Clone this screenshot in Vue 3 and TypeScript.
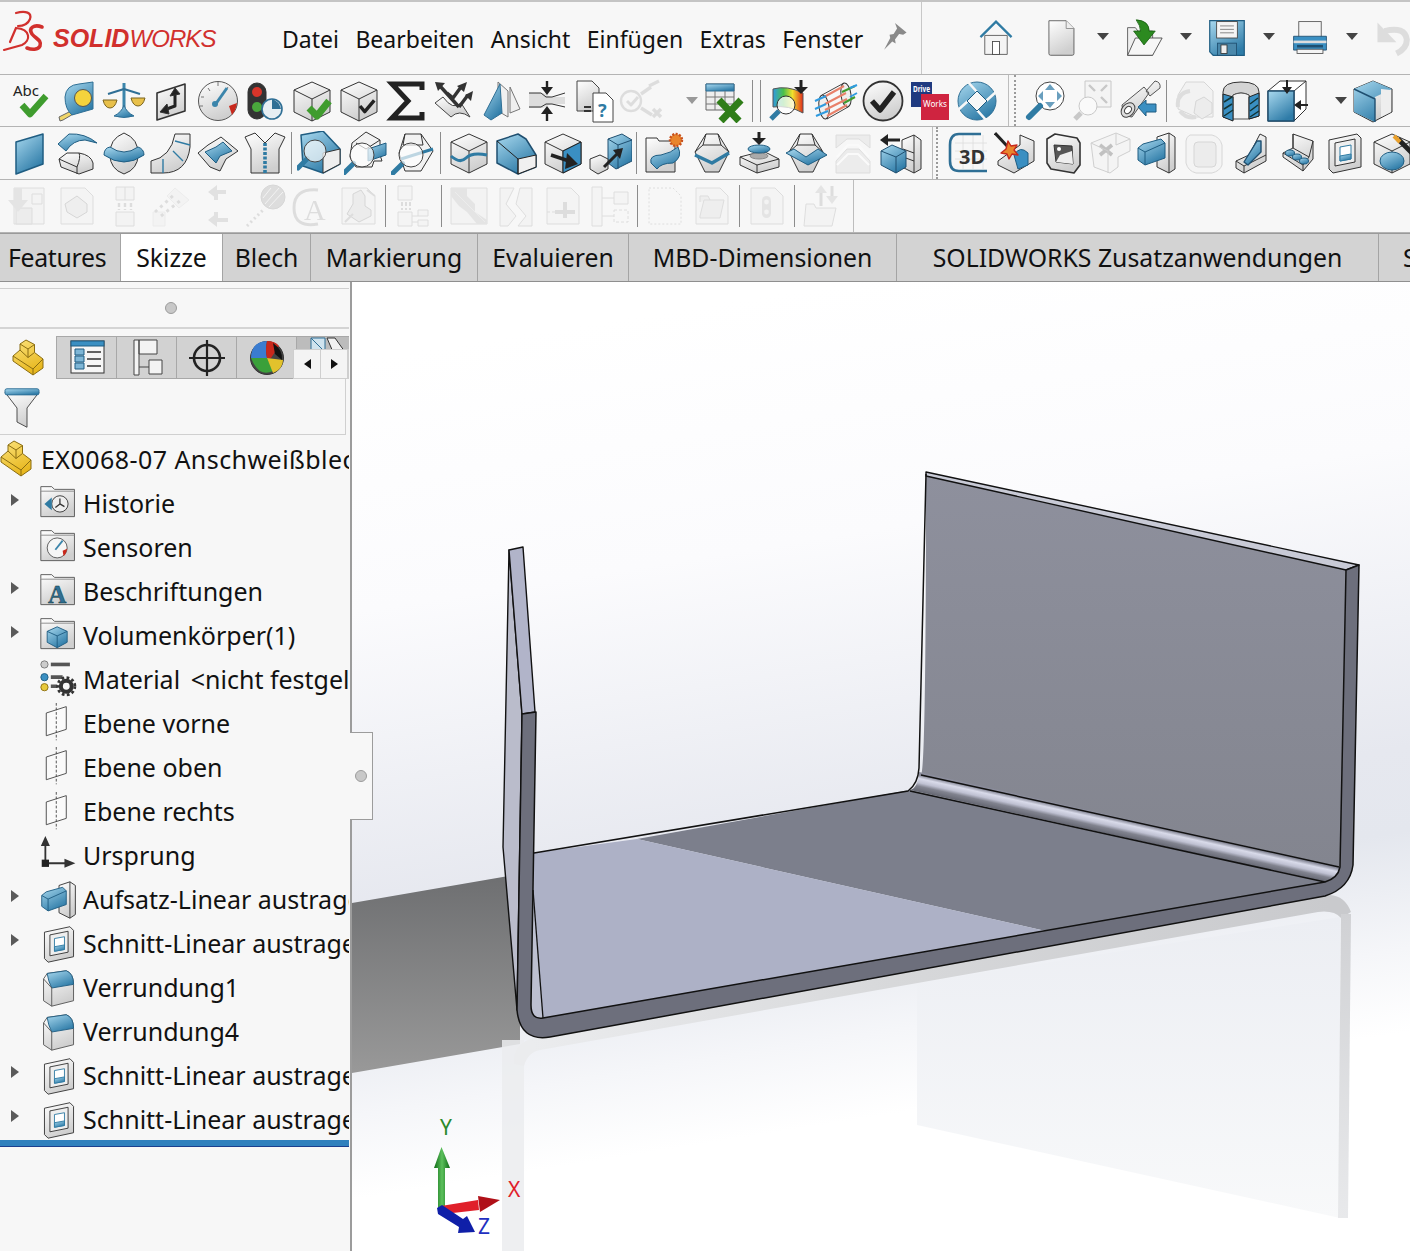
<script setup lang="ts">
type Item = { i?: string; dim?: boolean; kind?: 'line' | 'full' | 'dots' | 'drop'; sp?: number; w?: number }
type TreeRow = { label: string; icon: string; arrow?: boolean; root?: boolean }

const B = 'url(#bl)'
const W = 'url(#wh)'
const Y = 'url(#ye)'

const cube = `<path fill="${W}" d="M22 3L40 11V33L22 42L4 33V11Z"/><path d="M4 11L22 20L40 11M22 20V42"/>`
const lens = (x: number, y: number, r: number) =>
  `<path d="M${x - r * 0.7} ${y + r * 0.7}L${x - r - 6} ${y + r + 6}" stroke="#2f7ba3" stroke-width="5" stroke-linecap="round"/><circle cx="${x}" cy="${y}" r="${r}" fill="#ffffffb0" stroke="#444"/>`
const gem = `<path fill="${W}" d="M16 3H28L39 21L29 41H15L5 21Z"/><path d="M16 3L13 14L5 21M28 3L31 14L39 21M13 14H31"/>`
const check = (x: number, y: number, s = 1, c = '#222', w = 3.4) =>
  `<path d="M${x} ${y}l${5 * s} ${6 * s}l${10 * s} ${-12 * s}" stroke="${c}" stroke-width="${w}"/>`
const folder = `<path fill="${W}" stroke="#555" d="M2 8V4H14L17 7H39V37H2Z"/><path stroke="#888" d="M2 9H39"/>`
const square = `<path fill="${W}" d="M6 9L34 3L38 7V36L10 42L6 38Z"/><path fill="#eee" d="M12 12L32 8V31L12 35Z"/><path fill="#fff" stroke="#2f7ba3" d="M17 16L28 14V28L17 30Z"/><path fill="${B}" stroke="#2f7ba3" d="M17 25L28 23V28L17 30Z"/>`
const fillet = `<path fill="${W}" stroke="#555" d="M5 12L9 6L30 3Q38 6 38 18V36L14 42L5 36Z"/><path fill="${B}" stroke="#1f5d82" d="M9 6L30 3Q38 6 38 18L14 22Q10 14 9 6Z"/><path stroke="#555" d="M5 12L14 22V42"/>`
const boss = `<path fill="${W}" d="M22 6L34 2L40 6V38L34 42L22 36Z"/><path d="M34 2V42"/><path fill="${B}" stroke="#1f5d82" d="M3 17L8 13L26 8L30 12V27L10 34L3 29Z"/><path stroke="#1f5d82" d="M3 17L10 21L30 12M10 21V34"/>`
const part = `<path fill="${Y}" stroke="#8a6d12" stroke-linejoin="round" d="M7 20L14 14V8L20 4L28.5 8.5V16.5L37 23V32L27 39L7 25Z"/><path fill="none" stroke="#8a6d12" d="M7 20L27 33V39M27 33L37 23M14 8L22 13V21.5M22 13L28.5 8.5M14 14L22 21.5L28.5 16.5"/>`
const plane = `<path stroke="#444" fill="#fafafa" d="M8 11L30 4V29L8 36Z"/><path stroke="#444" stroke-dasharray="3 2" d="M19 0V41"/>`

const icons: Record<string, string> = {
  abc: `<text x="5" y="17" font-size="15" fill="#222" stroke="none" font-family="Noto Sans">Abc</text><path d="M14 26L22 35L38 17" stroke="#3f9c2e" stroke-width="6.5"/>`,
  tape: `<path fill="#f0d66a" stroke="#666" d="M4 38L18 31L20 34L8 41L5 42Z"/><path fill="${B}" stroke="#2f6f95" d="M10 18Q11 6 24 5L38 3V30L17 36Q10 30 10 18Z"/><circle cx="28" cy="19" r="8.5" fill="#f5d33c" stroke="#555"/>`,
  scales: `<path d="M22 4V30" stroke="#3b85ab" stroke-width="3"/><path d="M6 15L22 10L38 15" stroke="#2f6f95" stroke-width="2"/><path fill="#e8c04a" stroke="#7a6420" d="M1 21H15Q13 29 8 29Q3 29 1 21ZM29 19H43Q41 27 36 27Q31 27 29 19Z"/><path fill="${B}" stroke="#2f6f95" d="M12 37Q20 33 22 26Q24 33 32 37Q22 40 12 37Z"/>`,
  rapid: `<path fill="${W}" stroke-width="1.6" d="M8 14L36 5V32L8 41Z"/><path stroke="#222" stroke-width="3" d="M15 31L26 27V15"/><path fill="#222" d="M21 17L26 9L31 15ZM18 25L11 33L20 35Z"/>`,
  gauge: `<circle cx="22" cy="22" r="19.5" fill="${W}" stroke="#555"/><path fill="#c8281c" stroke="none" d="M33 27L41 24Q40 31 36 36Z"/><path stroke="#777" d="M7 27H4M5 18H8M12 9L14 12M22 3V7M32 8L30 11"/><path d="M19 26L31 9" stroke="#3b85ab" stroke-width="3"/><circle cx="19" cy="25" r="3" fill="#3b85ab" stroke="none"/>`,
  traffic: `<rect x="5" y="4" width="18" height="36" rx="9" fill="#333"/><circle cx="14" cy="13" r="5" fill="#d8352a" stroke="none"/><circle cx="14" cy="28" r="5" fill="#49a83c" stroke="none"/><circle cx="29" cy="30" r="10" fill="#e6eef3" stroke="#2f6f95" stroke-width="1.6"/><path fill="#2f6f95" stroke="none" d="M29 30V20Q36 22 38 30Z"/>`,
  cubeok: `${cube}<path d="M19 29L27 37L39 22" stroke="#3f9c2e" stroke-width="7"/>`,
  cubechk: `${cube}${check(23, 27, 0.95)}`,
  sigma: `<path stroke="#222" stroke-width="5" stroke-linejoin="miter" d="M38 11V5H8L24 22L8 39H38V33"/>`,
  xarrows: `<path fill="${W}" stroke="#444" d="M4 24L12 18Q22 32 30 24L39 38Q28 30 20 38Z"/><path stroke="#333" stroke-width="3.4" d="M9 7L28 28M30 8L22 19L16 14M37 16L28 28"/><path fill="#333" stroke="none" d="M4 3L14 4L7 12ZM36 3L33 13L26 7ZM42 12L40 22L34 16Z"/>`,
  draft: `<path fill="#f0f0f0" stroke="#777" d="M20 3L30 12V38L20 32ZM32 8L42 30L32 34Z"/><path fill="${B}" stroke="#2f6f95" d="M22 5L6 36L13 41L24 34Z"/>`,
  thick: `<path fill="#ddd" stroke="none" d="M4 14H18L26 18H40V25H26L18 29H4Z"/><path stroke="#333" d="M4 14H16L21 18H27L40 14M4 28H16L21 25H27L40 28"/><path fill="#222" stroke="none" d="M16 8H28L22 16ZM16 35H28L22 27Z"/><path stroke="#222" stroke-width="2.4" d="M22 2V10M22 33V42"/>`,
  compare: `<path fill="${W}" stroke="#444" d="M5 2H20L27 9V32H5Z"/><path fill="#fff" stroke="#444" d="M21 14H34L41 21V43H21Z"/><path d="M12 28H19M12 32H19" stroke="#333" stroke-width="2"/><text x="26" y="38" fill="#2f7ba3" stroke="none" font-size="18" font-weight="700" font-family="Noto Sans">?</text>`,
  xcheck: `<circle cx="12" cy="22" r="10" stroke="#bbb" stroke-width="2.4"/><path d="M8 22l4 4l7 -8" stroke="#bbb" stroke-width="3"/><path stroke="#bbb" stroke-width="3.4" d="M22 15L32 8M22 29L33 36M30 7L40 2M34 30L42 38M42 30L34 38"/>`,
  excel: `<rect x="3" y="5" width="28" height="26" fill="#eee" stroke="#666"/><rect x="3" y="5" width="28" height="7" fill="${B}" stroke="#2f6f95"/><path stroke="#777" d="M3 18H31M3 25H31M12 12V31M22 12V31"/><path stroke="#2f7d18" stroke-width="7" d="M16 21L36 42M38 21L18 42"/>`,
  dxp: `<path fill="url(#rb)" stroke="#555" d="M6 10Q20 6 36 14V34Q22 26 6 28Z"/><circle cx="19" cy="26" r="9" fill="#ffffffc0" stroke="#333"/><path d="M12 32L4 40" stroke="#2f7ba3" stroke-width="5"/><path stroke="#222" stroke-width="3" d="M34 1V9"/><path fill="#222" stroke="none" d="M27 8H41L34 15Z"/>`,
  flow: `<path fill="#f8f8f8" stroke="#444" d="M8 16L30 4L34 28L13 40Z"/><ellipse cx="10" cy="28" rx="5" ry="12" fill="#eee" stroke="#333" transform="rotate(-8 10 28)"/><ellipse cx="32" cy="16" rx="5" ry="12" fill="#eee" stroke="#333" transform="rotate(-8 32 16)"/><path stroke="#e8816a" stroke-width="2" d="M10 18L30 7M11 25L32 14M11 31L33 20M13 37L33 26"/><path stroke="#3f9c2e" stroke-width="2" d="M28 13L41 7M30 24L41 18"/><path stroke="#2f9be0" stroke-width="2" d="M36 9L43 6M36 18L43 14M1 22L12 17M1 30L12 25M2 37L14 32"/>`,
  okcircle: `<circle cx="22" cy="22" r="19.5" fill="${W}" stroke="#333" stroke-width="1.8"/><path d="M11 22L19 31L33 13" stroke="#222" stroke-width="5.5"/>`,
  drive: `<rect x="3" y="3" width="21" height="25" fill="#1f3a80" stroke="none"/><rect x="13" y="15" width="28" height="26" fill="#cf2440" stroke="none"/><text x="5" y="13" font-size="9.5" font-weight="700" fill="#fff" stroke="none" font-family="Noto Sans" textLength="17" lengthAdjust="spacingAndGlyphs">Drive</text><text x="15" y="28" font-size="9.5" fill="#fff" stroke="none" font-family="Noto Sans" textLength="24" lengthAdjust="spacingAndGlyphs">Works</text>`,
  cycle: `<circle cx="22" cy="22" r="19" fill="${B}" stroke="#2f6f95"/><path stroke="#f7f7f7" stroke-width="2.6" d="M22 13L13 3M31 22L41 13M22 31L31 41M13 22L3 31"/><path fill="#f7f7f7" stroke="#1f5d82" d="M22 12L32 22L22 32L12 22Z"/>`,
  zoomfit: `<circle cx="26" cy="17" r="14" fill="#fff" stroke="#444"/><path d="M16 27L5 38" stroke="#2f7ba3" stroke-width="6" stroke-linecap="round"/><path fill="#6a9fbe" stroke="none" d="M26 5L31 11H21ZM26 29L31 23H21ZM14 17L19 12V22ZM38 17L33 12V22Z"/>`,
  zoomarea: `<rect x="14" y="2" width="26" height="26" fill="#f0f0f0" stroke="#888"/><path stroke="#888" stroke-width="2.4" d="M18 6L24 12M36 6L30 12M36 24L30 18"/><circle cx="17" cy="27" r="9" fill="#fff" stroke="#888"/><path d="M10 34L4 40" stroke="#888" stroke-width="5"/>`,
  scope: `<path fill="${W}" stroke="#555" d="M4 26L26 8L31 14L14 38Q4 38 4 26ZM28 12L37 2Q43 3 42 9L32 17Z"/><ellipse cx="10" cy="31" rx="6" ry="8" fill="#ddd" stroke="#444" transform="rotate(40 10 31)"/><ellipse cx="10" cy="31" rx="3" ry="4" fill="#fff" stroke="#444" transform="rotate(40 10 31)"/><path fill="#3a8fc2" stroke="#1f5d82" d="M20 28L28 21V25H38V33H28V37Z"/>`,
  prev: `<path fill="#ececec" stroke="#aaa" d="M14 3H32L41 12V38H24L6 30V16Z"/><path fill="#ddd" stroke="#aaa" d="M24 22L32 18L40 24V34L30 40L22 34Z"/><path stroke="#bbb" stroke-width="4" d="M6 28Q4 14 18 12M8 32Q14 40 24 38"/>`,
  section: `<path fill="#d4d4d4" stroke="#333" d="M4 13Q4 3 22 3Q40 3 40 13V37L30 40V16Q22 12 14 16V41L4 38Z"/><path fill="#f2f2f2" stroke="#555" d="M14 16Q22 12 30 16V40H14Z"/><path fill="#3a8fc2" stroke="#222" d="M4 15L14 18V42L4 38ZM30 18L40 14V37L30 40Z"/><path stroke="#133" stroke-width="1.5" d="M5 23L13 18M5 30L13 25M5 37L14 31M31 25L39 19M31 32L39 26M31 38L40 32"/>`,
  orient: `<path fill="#fff" d="M2 12L14 2H40V30L28 42H2Z"/><path d="M28 12L40 2M28 12V42M2 12H28"/><path fill="${B}" stroke="#1f4f70" stroke-width="1.5" d="M2 12H28V42H2Z"/><path stroke="#222" stroke-width="2" d="M21 1V12M31 26H42"/><path fill="#222" stroke="none" d="M16 8H26L21 15ZM28 26L35 21V31Z"/>`,
  viewcube: `<path fill="${W}" stroke="#333" d="M22 2L41 10V33L22 43L3 33V10Z"/><path fill="${B}" stroke="none" d="M3 10L22 2L41 10L24 18V43L3 33Z"/><path stroke="#1f4f70" stroke-width="1.4" d="M3 10L24 20V43"/><path fill="#eee" stroke="none" d="M30 10L40 11V33L30 38Z"/>`,
  plane: `<path fill="${B}" stroke="#1f5d82" stroke-width="1.5" d="M8 11L35 3V33L8 43Z"/>`,
  sweep: `<path fill="${W}" d="M4 28L12 22H24Q36 24 38 32V38L24 43L6 36Z"/><path d="M4 28L22 36V43M22 36Q26 26 24 22"/><path fill="${B}" stroke="#1f5d82" d="M3 13L14 3Q30 2 42 12L30 9Q18 9 11 20Z"/>`,
  egg: `<path fill="${W}" d="M22 2Q37 8 36 24Q36 38 22 43Q8 38 8 24Q7 8 22 2Z"/><path fill="${B}" stroke="#1f5d82" d="M2 24Q2 17 8 16Q22 26 36 16Q42 18 42 24Q22 38 2 24Z"/>`,
  bend: `<path fill="${W}" d="M2 30Q22 26 26 3H41V16Q38 42 14 42H2Z"/><path stroke="#2f7ba3" stroke-width="1.4" d="M14 28V42M24 20L34 30M26 10L41 14"/>`,
  surf: `<path fill="${W}" d="M2 22L12 14L25 6L42 20L30 28L24 40L14 36Z"/><path fill="${B}" stroke="#1f5d82" d="M9 21L20 16L27 11L36 20L24 25L20 32Z"/>`,
  shirt: `<path fill="${W}" d="M2 6L12 2L22 12L32 2L42 6L36 18V42H8V18Z"/><path d="M22 12V42" stroke="#2f7ba3" stroke-width="3.6" stroke-dasharray="3 1.5"/>`,
  lenscube: `<path fill="${B}" stroke="#1f5d82" stroke-width="1.5" d="M4 4L26 0L43 18V33L26 42L6 35Z"/><path fill="#eee" d="M26 22L43 18V33L26 42Z"/>${lens(18, 20, 11)}`,
  lensblock: `<path fill="#f2f2f2" d="M8 12L22 1L36 9V24L38 30H30L28 36H12L6 26Z"/><path d="M12 12L22 18L36 9"/><path fill="${B}" stroke="#1f5d82" d="M24 18L42 12V24L24 30Z"/>${lens(18, 24, 12)}`,
  lensgem: `<path fill="#f2f2f2" d="M14 3H30L42 20L30 40H14L8 22Z"/><path d="M14 3L12 14M30 3L32 14M12 14H32"/><path d="M10 28L42 18" stroke="#2f7ba3" stroke-width="3"/>${lens(20, 24, 12)}`,
  wave: `${cube}<path d="M4 25Q13 33 19 27T40 24" stroke="#2f7ba3" stroke-width="3"/>`,
  chamfer: `<path fill="${B}" stroke="#1f4f70" stroke-width="1.5" d="M3 10L24 3L32 8L42 24V36L24 43L3 32Z"/><path fill="#f0f0f0" stroke="#222" d="M24 28L42 24V36L24 43Z"/><path stroke="#222" d="M3 10L24 28V43"/>`,
  move: `${cube}<path fill="#3a8fc2" stroke="#222" d="M22 20L40 11V33L22 42Z"/><path stroke="#222" stroke-width="3.6" d="M10 24L28 30"/><path fill="#222" stroke="none" d="M26 22L37 33L24 38Z"/>`,
  scale: `<path fill="${B}" stroke="#1f4f70" d="M20 8L34 3L44 9V30L28 38L20 32Z"/><path stroke="#1f4f70" d="M20 8L30 14L44 9M30 14V38"/><path fill="${W}" d="M2 28L12 24L20 28V38L10 43L2 38Z"/><path stroke="#222" stroke-width="3" d="M16 36L30 22"/><path fill="#222" stroke="none" d="M25 19L35 17L32 28Z"/>`,
  fsurf: `<path fill="${W}" stroke="#333" d="M3 12V7H14L16 10H32V41H3Z"/><path fill="${B}" stroke="#1f5d82" d="M8 32Q6 24 18 24Q28 22 35 16Q40 26 30 32Q18 32 14 38Z"/><circle cx="33" cy="9" r="6" fill="#e9852c" stroke="#c8501c" stroke-dasharray="2 1.4" stroke-width="2.4"/>`,
  gembelt: `${gem}<path d="M5 24L22 32L39 22" stroke="#2f7ba3" stroke-width="3.4"/>`,
  stamp: `<path fill="${W}" d="M3 26L26 20L42 28V36L20 42L3 34Z"/><path d="M3 26L20 34L42 28M20 34V42"/><ellipse cx="22" cy="25" rx="9" ry="3" fill="#aaa" stroke="#888"/><ellipse cx="22" cy="18" rx="11" ry="4" fill="${B}" stroke="#1f5d82"/><path stroke="#222" stroke-width="3" d="M22 1V8"/><path fill="#222" stroke="none" d="M15 7H29L22 14Z"/>`,
  gemwrap: `${gem}<path fill="${B}" stroke="#1f5d82" d="M2 22L10 18L22 26L34 18L43 24L24 34Z"/>`,
  press: `<path fill="#ddd" stroke="#bbb" d="M5 4H39V17L28 8H16L5 17ZM5 42V30L16 18H28L39 30V42Z"/><path stroke="#fff" stroke-width="2.2" d="M6 26L17 14H27L38 26M6 34L17 23H27L38 34"/>`,
  extrudeback: `<path fill="${W}" d="M24 9L36 4L43 9V38L36 42L24 36Z"/><path d="M36 4V42M25 18L36 22M25 26L36 30"/><path fill="${B}" stroke="#1f4f70" d="M3 20L14 14L28 20V36L18 42L3 34Z"/><path stroke="#1f4f70" d="M3 20L18 26L28 20M18 26V42"/><path stroke="#222" stroke-width="3" d="M8 9H22"/><path fill="#222" stroke="none" d="M2 9L10 3V15Z"/>`,
  d3: `<path stroke="#ddd" stroke-width="0.8" d="M8 12H40M8 20H40M8 28H40M16 4V38M26 4V38M36 4V38"/><path stroke="#2f6f95" stroke-width="2.6" d="M34 3H12Q3 3 3 14V30Q3 40 12 40H40"/><text x="12" y="33" font-size="20" font-weight="700" fill="#333" stroke="none" font-family="Noto Sans">3D</text>`,
  weld: `<path fill="${W}" d="M4 30L26 14V4L40 10V30L20 42L4 34Z"/><path fill="#3a8fc2" stroke="#1f5d82" d="M20 24Q26 14 34 22V34L24 38Z"/><path stroke="#222" stroke-width="3" d="M1 2L14 16"/><path fill="#e9852c" stroke="#c8281c" stroke-width="1.4" d="M14 10L17 15L23 14L20 19L24 24L18 23L15 28L13 23L7 22L12 18Z"/>`,
  tube: `<path fill="${W}" stroke-width="1.6" d="M6 8L14 3L36 7L39 12V34L33 42L10 38L6 32Z"/><path fill="#555" d="M13 14L31 15L32 33L15 31Z"/><path fill="#eee" stroke="none" d="M19 24L31 20L32 33L15 31Z"/><circle cx="18" cy="18" r="2" fill="#fff" stroke="none"/>`,
  xblock: `<path fill="#f0f0f0" stroke="#999" d="M3 12L18 6L28 2L42 8V20L30 26V36L22 42L6 36Z"/><path stroke="#777" stroke-width="3.6" d="M12 14L24 24M24 14L12 24"/><path stroke="#999" d="M3 12L20 20V42M28 2V14L42 8"/>`,
  shell: `<path fill="#f0f0f0" stroke="#aaa" d="M8 4H30Q38 6 40 14V34Q38 40 30 42H14Q6 40 4 32V10Q4 6 8 4Z"/><rect x="12" y="11" width="22" height="25" rx="4" fill="#ddd" stroke="#aaa"/>`,
  rib: `<path fill="${W}" d="M7 30L20 24L31 3L37 6V30L15 42L7 37Z"/><path d="M7 30L15 35V42M15 35L37 24"/><path fill="${B}" stroke="#1f4f70" stroke-width="1.4" d="M15 31L28 10L32 10V21L19 34Z"/>`,
  holes: `<path fill="${W}" d="M17 3L37 10V28L27 40L7 26V22L17 17Z"/><path d="M17 3V17L33 26L37 10M33 26L27 34V40M7 22L27 34"/><ellipse cx="14" cy="22" rx="4.5" ry="3" fill="${B}" stroke="#1f5d82"/><ellipse cx="21" cy="26" rx="4.5" ry="3" fill="${B}" stroke="#1f5d82"/><ellipse cx="28" cy="30" rx="4.5" ry="3" fill="${B}" stroke="#1f5d82"/>`,
  square,
  wand: `${cube}<ellipse cx="22" cy="30" rx="12" ry="9" fill="${B}" stroke="#1f5d82"/><path stroke="#222" stroke-width="5" d="M28 8L44 24"/><path stroke="#e9a02c" stroke-width="4" d="M24 5L30 11"/>`,
  n1: `<path d="M6 4H36V40H6Z" stroke="#bbb" fill="#eee"/><path stroke="#bbb" fill="#ddd" d="M8 24H24V40H8Z"/><path fill="#ccc" stroke="none" d="M6 4H14V16H20L10 28L0 16H6Z"/><path stroke="#bbb" d="M24 10H34V20H24Z"/>`,
  n2: `<path fill="#f0f0f0" stroke="#bbb" d="M6 4H30L38 12V40H6Z"/><path fill="#e2e2e2" stroke="#aaa" d="M10 20L22 12L32 20V28L22 34L12 28Z"/>`,
  n3: `<path stroke="#bbb" fill="#eee" d="M14 3H32V16H14ZM14 28H32V42H14Z"/><path stroke="#bbb" stroke-width="2.4" stroke-dasharray="4 2" d="M17 19V26M23 19V26M29 19V26"/><path stroke="#bbb" d="M23 3V16"/>`,
  n4: `<path stroke="#ddd" fill="#eee" d="M26 4L40 16L30 24L18 12ZM4 28H16V42H4Z"/><path stroke="#bbb" stroke-width="3" stroke-dasharray="3 4" d="M6 28L26 10M12 32L32 16"/>`,
  n5: `<path stroke="#c4c4c4" stroke-width="4" fill="none" d="M30 8H20V16M20 28V36H32"/><path fill="#c4c4c4" stroke="none" d="M12 8L21 1V15ZM12 36L21 29V43Z"/>`,
  n6: `<circle cx="30" cy="13" r="12" fill="#bbb" stroke="#aaa"/><path stroke="#eee" d="M20 14L28 4M22 20L36 4M26 23L40 8"/><path stroke="#bbb" stroke-width="3" stroke-dasharray="2 3" d="M4 42L20 26"/>`,
  n7: `<path stroke="#bbb" stroke-width="3" d="M28 6Q4 4 4 24Q4 44 28 40"/><text x="14" y="36" font-size="30" fill="#bbb" stroke="none" font-family="Liberation Serif">A</text>`,
  n8: `<path fill="#f0f0f0" stroke="#bbb" d="M5 4H30L38 12V40H5Z"/><path fill="#ddd" stroke="#aaa" d="M10 30L16 20V10L24 6L28 12V22L34 26V32L22 38Z"/><path d="M30 6L38 12M8 38L16 30" stroke="#bbb" stroke-width="2"/>`,
  n9: `<path stroke="#bbb" fill="#f2f2f2" d="M6 2H20V16H6ZM6 28H20V42H6ZM26 26H36V32H26ZM26 36H36V42H26Z"/><path stroke="#bbb" stroke-width="2" stroke-dasharray="4 2" d="M10 18V26M14 18V26M18 18V26"/><path stroke="#bbb" d="M20 32H26M20 38H26"/>`,
  n10: `<rect x="4" y="4" width="36" height="36" fill="#eee" stroke="#bbb"/><path fill="#ccc" stroke="none" d="M4 4H20V12L28 20V28L40 36V40H30L20 28L12 22L4 12Z"/><path stroke="#ddd" d="M8 8L38 38"/>`,
  n11: `<path stroke="#bbb" fill="#eee" d="M6 4H20L12 20L22 32L14 42H6ZM26 4H38V42H24L32 32L22 20Z"/>`,
  n12: `<path fill="#f0f0f0" stroke="#bbb" d="M6 4H30L38 12V40H6Z"/><path stroke="#bbb" stroke-width="4" d="M24 18V34M14 28H34"/><path stroke="#bbb" stroke-dasharray="3 2" d="M6 28H14"/>`,
  n13: `<path stroke="#bbb" fill="#f2f2f2" d="M4 3H14V42H4ZM26 8H40V20H26Z"/><path stroke="#bbb" d="M14 14H26M14 32H26"/><path stroke="#bbb" stroke-dasharray="3 2" d="M26 26H40V38H26Z"/>`,
  n14: `<path stroke="#bbb" stroke-dasharray="2 2" d="M6 4H30L38 12V40H6Z"/>`,
  n15: `<path fill="#f0f0f0" stroke="#bbb" d="M6 4H30L38 12V40H6Z"/><path fill="#e4e4e4" stroke="#bbb" d="M10 32L14 16H34L30 34H10ZM10 18V12H18L20 16"/>`,
  n16: `<path fill="#f0f0f0" stroke="#bbb" d="M6 4H30L38 12V40H6Z"/><rect x="17" y="12" width="9" height="22" rx="4.5" fill="#ccc" stroke="none"/><circle cx="21.5" cy="18" r="2.4" fill="#eee" stroke="none"/><circle cx="21.5" cy="28" r="2.4" fill="#eee" stroke="none"/>`,
  n17: `<path fill="#eee" stroke="#bbb" d="M6 20H14L16 24H36L32 42H4Z"/><path stroke="#bbb" stroke-width="3" d="M21 8V22M32 2V14"/><path fill="#ccc" stroke="none" d="M15 9L21 1L27 9ZM26 12H38L32 20Z"/>`,
  home: `<path fill="#f4f4f4" stroke="#555" d="M9 19H35V41H9Z"/><rect x="18" y="26" width="8" height="15" fill="#fff" stroke="#444"/><path fill="none" stroke="#2f7ba3" stroke-width="2.6" d="M4 21L22 3L40 21"/>`,
  doc: `<path fill="${W}" stroke="#555" d="M8 2H28L37 11V40Q37 42 35 42H10Q8 42 8 40Z"/><path stroke="#888" fill="#eee" d="M28 2V11H37"/>`,
  open: `<path fill="#eee" stroke="#555" d="M3 42V10H12L15 14H32V42Z"/><path fill="#f6f6f6" stroke="#444" d="M3 42L12 22H43L32 42Z"/><path fill="#2c8a20" stroke="#1a6012" d="M13 1Q28 2 28 14H35L22 30L10 14H18Q18 8 13 1Z"/>`,
  save: `<path fill="url(#bl)" stroke="#1f5d82" stroke-width="1.4" d="M2 2H42V42H6L2 38Z"/><rect x="10" y="3" width="24" height="19" fill="#f4f4f4" stroke="#444"/><path stroke="#777" d="M14 8H30M14 12H30M14 16H30"/><rect x="11" y="28" width="22" height="14" fill="#4a88ab" stroke="#1f4f70"/><rect x="15" y="30" width="7" height="10" fill="#eee" stroke="#333"/>`,
  print: `<rect x="9" y="3" width="26" height="22" fill="#f4f4f4" stroke="#555"/><path fill="#3a8fc2" stroke="#1f4f70" d="M3 20H41V36H3Z"/><rect x="3" y="25" width="38" height="3" fill="#ddd" stroke="none"/><rect x="7" y="30" width="30" height="3" fill="#1f4f70" stroke="none"/><rect x="7" y="35" width="30" height="5" fill="#f4f4f4" stroke="#555"/>`,
  undo: `<path stroke="#bbb" stroke-width="7" d="M12 14Q36 8 38 24Q38 34 26 40"/><path fill="#bbb" stroke="none" d="M4 4V27H26Z"/>`,
  pin: `<path fill="#8a8a8a" stroke="none" d="M22 3L39 17L34 20L28 19L22 27L23 33L18 30L6 42L15 25L14 20L20 19L25 11Z"/>`,
  filter: `<path fill="${W}" stroke="#444" d="M3 6H37L25 24V46L15 40V24Z"/><rect x="3" y="2" width="34" height="7" rx="2" fill="${B}" stroke="#2f6f95"/>`,
  tPart: part,
  tList: `<rect x="6" y="5" width="33" height="32" fill="#f6f6f6" stroke="#333"/><rect x="6" y="5" width="33" height="5" fill="#3a8fc2" stroke="#1f5d82"/><path fill="#7eb6d6" stroke="#1f5d82" d="M10 13H19V19H10ZM10 20H19V26H10ZM10 27H19V33H10Z"/><path stroke="#333" stroke-width="1.6" d="M22 16H36M22 23H36M22 30H36"/>`,
  tTree: `<path stroke="#444" fill="#f4f4f4" d="M9 4H14V39H9ZM14 4H32V18H14ZM24 24H37V38H24Z"/><path stroke="#444" d="M14 31H24"/>`,
  tCross: `<circle cx="22" cy="22" r="13" stroke="#222" stroke-width="2.6"/><path stroke="#222" stroke-width="2.2" d="M4 22H40M22 4V40"/>`,
  tBall: `<circle cx="22" cy="22" r="16.5" fill="#444" stroke="#333"/><path fill="#3a7cd0" stroke="none" d="M6 22Q6 6 22 5Q20 14 22 22Z"/><path fill="#3aa03a" stroke="none" d="M6 22H22L28 35Q14 42 6 22Z"/><path fill="#e2c22c" stroke="none" d="M22 22L38 24Q38 33 28 37Z"/><path fill="#c8281c" stroke="none" d="M22 5Q30 5 34 10L26 22H22Q20 14 22 5Z"/><path fill="#111" stroke="none" d="M28 7Q38 14 37 24L30 18Z"/>`,
  tSheet: `<path stroke="#2f6f95" fill="#cfe3ee" d="M10 1H24V15H10Z"/><path stroke="#2f6f95" d="M10 1L24 15"/><path stroke="#333" fill="#f2f2f2" d="M26 1H34L44 15H32Z"/>`,
  hist: `${folder}<circle cx="23" cy="23" r="9" fill="#eee" stroke="#333"/><path fill="#2f7ba3" stroke="none" d="M6 23L14 16V30Z"/><path stroke="#333" stroke-width="1.4" d="M23 17V23L28 26M23 23L18 27"/>`,
  sens: `${folder}<circle cx="20" cy="23" r="11" fill="#f6f6f6" stroke="#555"/><path fill="#c8281c" stroke="none" d="M26 26L31 24Q30 30 27 32Z"/><path stroke="#3b85ab" stroke-width="2" d="M18 25L26 15"/>`,
  anno: `${folder}<text x="10" y="35" font-size="28" font-weight="700" fill="#2f6f95" stroke="#133" stroke-width="0.5" font-family="Liberation Serif">A</text>`,
  bodies: `${folder}<path fill="${B}" stroke="#1f5d82" d="M20 13L31 18V30L20 36L9 30V18Z"/><path stroke="#1f5d82" d="M9 18L20 23L31 18M20 23V36"/>`,
  mat: `<circle cx="6" cy="6" r="4" fill="#ccc" stroke="#777"/><path stroke="#555" stroke-width="4" d="M13 6H34"/><circle cx="6" cy="20" r="4" fill="#3a8fc2" stroke="#1f5d82"/><path stroke="#555" stroke-width="4" d="M13 20H26M13 30H20"/><circle cx="6" cy="31" r="4" fill="#e8c93c" stroke="#8a6d12"/><circle cx="30" cy="30" r="6" stroke="#333" stroke-width="4.5"/><circle cx="30" cy="30" r="9.5" stroke="#333" stroke-width="3" stroke-dasharray="3 2.6"/>`,
  plane2: plane,
  origin: `<path stroke="#333" stroke-width="2" d="M7 6V30H30"/><path fill="#333" stroke="none" d="M2 11L7 0L12 11ZM28 25L40 30L28 35Z"/><rect x="3" y="26" width="8" height="8" fill="#222" stroke="none"/>`,
  boss,
  fillet,
}

const ic = (i: string, dim = false): Item => ({ i, dim })
const many = (s: string): Item[] => s.split(' ').map(n => ic(n))
const faded = (s: string): Item[] => s.split(' ').map(n => ic(n, true))
const line = (sp: number, w: number): Item => ({ kind: 'line', sp, w })
const full = (sp: number, w: number): Item => ({ kind: 'full', sp, w })
const dots = (sp: number, w: number): Item => ({ kind: 'dots', sp, w })
const drop = (w: number): Item => ({ kind: 'drop', w })

const rows: Item[][] = [
  [
    ...many('abc tape scales rapid gauge traffic cubeok cubechk sigma xarrows draft thick compare'),
    ic('xcheck', true), drop(36.5), ic('excel'), line(4, 8), line(0, 5.5),
    ...many('dxp flow okcircle drive cycle'), full(7.5, 6), dots(0, 8.5),
    ...many('zoomfit'), ic('zoomarea', true), ic('scope'), line(2.5, 4.5),
    ic('prev', true), ...many('section orient'), drop(38), ic('viewcube'),
  ],
  [
    ...many('plane sweep egg bend surf shirt'), line(2.5, 4.5),
    ...many('lenscube lensblock lensgem'), line(3.5, 5.5),
    ...many('wave chamfer move scale'), line(2.5, 5.5),
    ...many('fsurf gembelt stamp gemwrap'), ic('press', true), ic('extrudeback'), full(8.5, 4), dots(0, 9.5),
    ...many('d3 weld tube'), ic('xblock', true), ic('boss'), ic('shell', true), ...many('rib holes square wand'),
  ],
  [
    ...faded('n1 n2 n3 n4 n5 n6 n7 n8'), line(2.5, 5.5),
    ...faded('n9'), line(3.5, 4.5),
    ...faded('n10 n11 n12 n13'), line(3.5, 4.5),
    ...faded('n14 n15'), line(3, 5),
    ...faded('n16'), line(3, 5),
    ...faded('n17'), full(7.5, 0),
  ],
]

const menu = ['Datei', 'Bearbeiten', 'Ansicht', 'Einfügen', 'Extras', 'Fenster']
const quick = ['doc', 'open', 'save', 'print']
const tabs = [
  { t: 'Features', w: 121 }, { t: 'Skizze', w: 102, on: true }, { t: 'Blech', w: 88 },
  { t: 'Markierung', w: 167 }, { t: 'Evaluieren', w: 151 }, { t: 'MBD-Dimensionen', w: 268 },
  { t: 'SOLIDWORKS Zusatzanwendungen', w: 482 }, { t: 'SOLIDWORKS', w: 60 },
]
const pmTabs = ['tList', 'tTree', 'tCross', 'tBall']
const tree: TreeRow[] = [
  { label: 'EX0068-07 Anschweißblech', icon: 'tPart', root: true },
  { label: 'Historie', icon: 'hist', arrow: true },
  { label: 'Sensoren', icon: 'sens' },
  { label: 'Beschriftungen', icon: 'anno', arrow: true },
  { label: 'Volumenkörper(1)', icon: 'bodies', arrow: true },
  { label: 'Material \u2009<nicht festgelegt>', icon: 'mat' },
  { label: 'Ebene vorne', icon: 'plane2' },
  { label: 'Ebene oben', icon: 'plane2' },
  { label: 'Ebene rechts', icon: 'plane2' },
  { label: 'Ursprung', icon: 'origin' },
  { label: 'Aufsatz-Linear austragen1', icon: 'boss', arrow: true },
  { label: 'Schnitt-Linear austragen1', icon: 'square', arrow: true },
  { label: 'Verrundung1', icon: 'fillet' },
  { label: 'Verrundung4', icon: 'fillet' },
  { label: 'Schnitt-Linear austragen2', icon: 'square', arrow: true },
  { label: 'Schnitt-Linear austragen3', icon: 'square', arrow: true },
]
</script>

<template>
  <div class="app">
    <svg class="defs" width="0" height="0">
      <defs>
        <linearGradient id="bl" x1="0" y1="0" x2="0.6" y2="1"><stop offset="0" stop-color="#a9d9ef" /><stop offset="1" stop-color="#2f7ca8" /></linearGradient>
        <linearGradient id="wh" x1="0" y1="0" x2="0.4" y2="1"><stop offset="0" stop-color="#ffffff" /><stop offset="1" stop-color="#cfcfcf" /></linearGradient>
        <linearGradient id="ye" x1="0" y1="0" x2="0.4" y2="1"><stop offset="0" stop-color="#fbe27a" /><stop offset="1" stop-color="#e8b820" /></linearGradient>
        <linearGradient id="rb" x1="0" y1="0" x2="1" y2="0"><stop offset="0" stop-color="#2f9be0" /><stop offset="0.35" stop-color="#4ac04a" /><stop offset="0.65" stop-color="#f2e02c" /><stop offset="1" stop-color="#e02c1c" /></linearGradient>
      </defs>
    </svg>

    <header class="topbar">
      <svg class="logo" viewBox="0 0 283 74">
        <g fill="none" stroke="#d1302d" stroke-linecap="round">
          <path stroke-width="2.2" d="M16 13C26 10 32 13 30 19C28 24 23 26 18 26" />
          <path stroke-width="2.2" d="M4 50L22 45C31 41 31 29 16 28L10 42" />
          <path stroke-width="3.6" d="M42 27C34 24 28 28 32 34C36 39 42 40 40 46C38 50 32 50 27 48" />
        </g>
        <text x="53" y="47" class="logo-text"><tspan class="solid">SOLID</tspan><tspan class="works">WORKS</tspan></text>
      </svg>
      <nav class="menu">
        <span v-for="m in menu" :key="m">{{ m }}</span>
        <svg class="pin" viewBox="0 0 44 44" v-html="icons.pin"></svg>
      </nav>
      <div class="quick">
        <svg class="icon home" viewBox="0 0 44 44" fill="none" stroke="#333" v-html="icons.home"></svg>
        <div v-for="q in quick" :key="q" class="quick-item">
          <svg class="icon" viewBox="0 0 44 44" fill="none" stroke="#333" v-html="icons[q]"></svg>
          <i class="arrow-down"></i>
        </div>
        <svg class="icon dim" viewBox="0 0 44 44" fill="none" stroke="#333" v-html="icons.undo"></svg>
      </div>
    </header>

    <div v-for="(row, r) in rows" :key="r" class="tool-row">
      <template v-for="(it, n) in row" :key="n">
        <span v-if="it.kind === 'drop'" class="drop" :style="{ width: it.w + 'px' }"><i class="arrow-down" :class="{ soft: r === 0 && n === 14 }"></i></span>
        <span v-else-if="it.kind" class="sep" :class="it.kind" :style="{ marginLeft: it.sp + 'px', width: it.w + 'px' }"></span>
        <span v-else class="slot">
          <svg class="icon" :class="{ dim: it.dim }" viewBox="0 0 44 44" fill="none" stroke="#333" stroke-linejoin="round" v-html="icons[it.i as string]"></svg>
        </span>
      </template>
    </div>

    <div class="tabs">
      <div v-for="t in tabs" :key="t.t" class="tab" :class="{ on: t.on }" :style="{ width: t.w + 'px' }">{{ t.t }}</div>
    </div>

    <main class="main">
      <aside class="side">
        <div class="grip"><i class="dot"></i></div>
        <div class="pm-tabs">
          <div class="pm-tab active"><svg class="icon" viewBox="0 0 44 44" v-html="icons.tPart"></svg></div>
          <div v-for="p in pmTabs" :key="p" class="pm-tab"><svg class="icon" viewBox="0 0 44 44" fill="none" stroke="#333" v-html="icons[p]"></svg></div>
          <div class="pm-tab rest"><svg class="icon" viewBox="0 0 44 44" fill="none" stroke="#333" v-html="icons.tSheet"></svg></div>
          <div class="pm-nav"><span><i class="tri left"></i></span><span><i class="tri"></i></span></div>
        </div>
        <div class="filter"><svg class="funnel" viewBox="0 0 40 48" preserveAspectRatio="none" fill="none" v-html="icons.filter"></svg></div>
        <div class="tree">
          <div v-for="(row, n) in tree" :key="n" class="node" :class="{ root: row.root }">
            <span class="twist"><i v-if="row.arrow" class="tri grey"></i></span>
            <svg class="node-ic" viewBox="0 0 44 44" fill="none" stroke="#333" stroke-linejoin="round" v-html="icons[row.icon]"></svg>
            <span class="label">{{ row.label }}</span>
          </div>
        </div>
        <div class="rollback"></div>
      </aside>

      <section class="view">
        <svg class="scene" viewBox="352 282 1058 969" preserveAspectRatio="none">
          <defs>
            <linearGradient id="sky" gradientUnits="userSpaceOnUse" x1="850" y1="282" x2="980" y2="1100">
              <stop offset="0" stop-color="#ffffff" /><stop offset="0.3" stop-color="#fbfbfd" /><stop offset="0.66" stop-color="#e6e8ef" /><stop offset="0.76" stop-color="#e4e7ee" /><stop offset="0.9" stop-color="#f5f6f9" /><stop offset="1" stop-color="#ffffff" />
            </linearGradient>
            <linearGradient id="drop-shade" gradientUnits="userSpaceOnUse" x1="440" y1="880" x2="440" y2="1070">
              <stop offset="0" stop-color="#6f7072" /><stop offset="1" stop-color="#989898" />
            </linearGradient>
            <linearGradient id="wall" x1="0" y1="0" x2="0" y2="1"><stop offset="0" stop-color="#8e909d" /><stop offset="1" stop-color="#83858f" /></linearGradient>
            <linearGradient id="band" gradientUnits="userSpaceOnUse" x1="1130" y1="822" x2="1126.3" y2="838.6">
              <stop offset="0" stop-color="#8a8c9b" /><stop offset="0.2" stop-color="#d9dbea" /><stop offset="0.45" stop-color="#bfc1d2" /><stop offset="0.65" stop-color="#81838f" /><stop offset="1" stop-color="#62646f" />
            </linearGradient>
            <linearGradient id="ref-h" gradientUnits="userSpaceOnUse" x1="534" y1="1050" x2="1330" y2="900">
              <stop offset="0" stop-color="#ebecee" /><stop offset="0.45" stop-color="#d7d8da" /><stop offset="1" stop-color="#c9cacd" />
            </linearGradient>
            <linearGradient id="ref-v" gradientUnits="userSpaceOnUse" x1="0" y1="900" x2="0" y2="1230">
              <stop offset="0" stop-color="#cfd0d3" /><stop offset="1" stop-color="#e9eaec" />
            </linearGradient>
            <linearGradient id="wall-ref" gradientUnits="userSpaceOnUse" x1="0" y1="920" x2="0" y2="1220">
              <stop offset="0" stop-color="#eceef3" /><stop offset="1" stop-color="#f8f9fa" />
            </linearGradient>
            <linearGradient id="y-axis" x1="0" y1="0" x2="1" y2="0"><stop offset="0" stop-color="#0f6b16" /><stop offset="0.5" stop-color="#5cc05c" /><stop offset="1" stop-color="#0f6b16" /></linearGradient>
          </defs>
          <rect x="352" y="282" width="1058" height="969" fill="url(#sky)" />

          <!-- Bodenspiegelung und Schatten -->
          <path fill="url(#wall-ref)" d="M917 983L1340 917V1218L917 1125Z" />
          <path fill="url(#drop-shade)" d="M352 903L520 874V1044L352 1073Z" />
          <path fill="#ebecee" opacity="0.85" d="M502 1040H524V1251H502Z" />
          <path fill="url(#ref-h)" d="M530 1039L1330 895Q1345 896 1351 912L1341 918Q1334 910 1318 912L540 1050Q528 1052 524 1066L514 1064Q512 1046 530 1039Z" />
          <path fill="url(#ref-v)" d="M1341 914H1351L1348 1218H1338Z" />

          <!-- Blech -->
          <path fill="url(#wall)" d="M926 473L1346 570L1340 867L921 775Q926 770 926 473Z" />
          <path fill="#c8cad6" stroke="#111" stroke-width="1.4" stroke-linejoin="round" d="M926 472L1359 565L1346 570L926 476Z" />
          <path fill="#7c7f8c" d="M637 839L910 790L1325 882L1050 932Z" />
          <path fill="#adb1c6" d="M534 853L637 839L1050 932L543 1018L533 890Z" />
          <path fill="#bdc0d1" d="M533 890L543 1018Q532 1020 531 1008Z" />
          <path fill="url(#band)" d="M919 772Q918 788 910 790L1325 882Q1338 878 1340 867Z" />
          <path fill="none" stroke="#111" stroke-width="1.5" d="M926 474L919 768Q918 784 908 791L534 853M921 775L1339 867M910 791L1325 882" />

          <path fill="#babccb" stroke="#111" stroke-width="1.4" stroke-linejoin="round" d="M509 550L522 714L517 1010L503 847Z" />
          <path fill="#b1b4c9" stroke="#111" stroke-width="1.4" stroke-linejoin="round" d="M509 550L523 547L535 712L522 714Z" />
          <path fill="#6d6f7c" stroke="#111" stroke-width="1.5" stroke-linejoin="round" d="M522 714L536 712L531 1005Q531 1020 543 1018L1325 882Q1338 878 1340 867L1346 570L1359 565L1353 865Q1350 888 1325 896L550 1037Q520 1042 517 1010Z" />
          <path fill="none" stroke="#111" stroke-width="1.3" d="M533 890L543 1018" />

          <!-- Koordinatensystem -->
          <path fill="url(#y-axis)" d="M438 1210V1168H434L441.5 1147L450 1168H445V1210Z" />
          <path fill="#e0202a" d="M441 1206L478 1200L479 1210L444 1214Z" />
          <path fill="#b01018" d="M478 1196L500 1200L480 1212Z" />
          <path fill="#0f1fa8" d="M437 1208L442 1205L463 1219L467 1216L475 1232L458 1233L459 1227L438 1214Z" />
          <text x="440" y="1135" class="axis" fill="#2a8a2a">Y</text>
          <text x="508" y="1197" class="axis" fill="#e0202a">X</text>
          <text x="478" y="1234" class="axis" fill="#1f2fc0">Z</text>
        </svg>
      </section>

      <div class="handle"><i class="dot"></i></div>
    </main>
  </div>
</template>

<style>
html, body { margin: 0; background: #fff; }
</style>

<style scoped>
.app {
  width: 1410px;
  height: 1251px;
  overflow: hidden;
  display: flex;
  flex-direction: column;
  background: #f7f7f7;
  font-family: "Noto Sans", sans-serif;
  color: #111;
}
.defs { position: absolute; }

.topbar {
  height: 75px;
  flex: none;
  display: flex;
  box-sizing: border-box;
  border-top: 2px solid #c4c4c4;
  border-bottom: 1px solid #b4b4b4;
}
.logo { width: 283px; height: 74px; margin-top: -2px; flex: none; }
.logo-text { font-family: "Liberation Sans", sans-serif; font-size: 25px; font-style: italic; fill: #d1302d; }
.solid { font-weight: 700; }
.works { font-size: 24px; letter-spacing: -0.9px; }

.menu {
  width: 639px;
  flex: none;
  box-sizing: border-box;
  display: flex;
  align-items: center;
  gap: 16.5px;
  padding: 2px 0 0;
  font-size: 23px;
  border-right: 1px solid #c8c8c8;
}
.menu span:first-child { margin-left: -1px; }
.pin { display: block; flex: none; margin-left: auto; margin-right: 11px; margin-top: -6px; width: 30px; height: 30px; }

.quick { display: flex; align-items: center; padding-left: 52px; }
.icon { width: 44px; height: 44px; display: block; flex: none; }
.quick .icon { width: 38px; height: 38px; margin: 0 3px; }
.quick .home { margin-right: 24px; }
.quick-item { width: 83px; display: flex; align-items: center; flex: none; }
.quick-item .arrow-down { margin-left: 14px; margin-bottom: 4px; }

.dim { filter: grayscale(1); opacity: 0.42; }

.arrow-down {
  display: block;
  width: 0;
  height: 0;
  border: 6px solid transparent;
  border-top: 7px solid #444;
  border-bottom: 0;
}
.arrow-down.soft { border-top-color: #999; }

.tool-row {
  height: 53px;
  flex: none;
  box-sizing: border-box;
  display: flex;
  align-items: center;
  padding-left: 6.5px;
  border-bottom: 1px solid #b4b4b4;
  overflow: hidden;
}
.tool-row:first-of-type { height: 52px; }
.slot { width: 47px; flex: none; display: flex; justify-content: center; }
.drop { flex: none; display: flex; justify-content: flex-end; padding-right: 3px; box-sizing: border-box; }
.sep { flex: none; box-sizing: border-box; border-left: 1px solid #8c8c8c; height: 42px; }
.sep.full { height: 100%; border-left-color: #bdbdbd; }
.sep.dots { height: 100%; border-left: 2px dotted #9a9a9a; }

.tabs {
  height: 49px;
  flex: none;
  box-sizing: border-box;
  display: flex;
  background: #d3d3d3;
  border-top: 1px solid #9a9a9a;
  border-bottom: 1px solid #8f8f8f;
  overflow: hidden;
  font-size: 24.8px;
}
.tab {
  flex: none;
  box-sizing: border-box;
  display: flex;
  align-items: center;
  justify-content: center;
  border-right: 1px solid #a4a4a4;
  white-space: nowrap;
  overflow: hidden;
  padding-bottom: 1px;
}
.tab:first-child { justify-content: flex-start; padding-left: 8px; letter-spacing: -0.3px; }
.tab:last-child { justify-content: flex-start; padding-left: 24px; border-right: 0; }
.tab.on { background: #fff; }

.main { flex: 1; display: flex; position: relative; min-height: 0; }
.side {
  width: 352px;
  flex: none;
  box-sizing: border-box;
  border-right: 2px solid #9c9c9c;
  background: #f7f7f7;
  overflow: hidden;
}
.grip {
  height: 41px;
  margin: 6px 0 0;
  padding-right: 7px;
  display: flex;
  align-items: center;
  justify-content: center;
  border-top: 1px solid #cfcfcf;
  border-bottom: 2px solid #d4d4d4;
  width: 349px;
  box-sizing: border-box;
}
.dot {
  display: block;
  width: 12px;
  height: 12px;
  border-radius: 50%;
  background: #c8c8c8;
  border: 1px solid #9c9c9c;
  box-sizing: border-box;
}

.pm-tabs { position: relative; display: flex; height: 43px; margin-top: 7px; width: 349px; overflow: hidden; }
.pm-tab {
  width: 60px;
  flex: none;
  box-sizing: border-box;
  display: flex;
  align-items: center;
  justify-content: center;
  background: #d2d2d2;
  border-right: 1px solid #a8a8a8;
  border-bottom: 1px solid #a8a8a8;
  border-top: 1px solid #a8a8a8;
}
.pm-tab.active { width: 57px; background: #f7f7f7; border-bottom: 0; border-top: 0; }
.pm-tab.rest { width: 52px; border-right: 0; align-items: flex-start; background: #bcbcbc; }
.pm-nav {
  position: absolute;
  right: 0;
  bottom: 0;
  width: 56px;
  height: 30px;
  display: flex;
  background: #f4f4f4;
  border: 1px solid #cfcfcf;
  box-sizing: border-box;
}
.pm-nav span { flex: 1; display: flex; align-items: center; justify-content: center; border-right: 1px solid #cfcfcf; }
.tri { display: block; width: 0; height: 0; border: 5.5px solid transparent; border-left: 7px solid #111; border-right: 0; }
.tri.left { transform: scaleX(-1); }
.tri.grey { border-width: 6.5px 0 6.5px 8px; border-color: transparent transparent transparent #5a5a5a; }

.filter {
  height: 56px;
  width: 346px;
  box-sizing: border-box;
  border-right: 1px solid #d0d0d0;
  border-bottom: 1px solid #d0d0d0;
  padding: 8px 0 0 2px;
}
.funnel { width: 40px; height: 42px; display: block; }

.tree { height: 706px; width: 349px; margin-top: 2px; overflow: hidden; }
.node { height: 44.07px; display: flex; align-items: center; white-space: nowrap; font-size: 25px; }
.twist { width: 39px; flex: none; display: flex; justify-content: flex-start; padding-left: 11px; box-sizing: border-box; padding-bottom: 7px; }
.node-ic { width: 40px; height: 40px; flex: none; margin-right: 4px; }
.node.root .twist { display: none; }
.node.root .node-ic { width: 44px; height: 44px; margin-right: 3px; margin-left: -6px; }
.node.root .label { letter-spacing: 0.45px; }
.label { padding-bottom: 1px; }

.rollback {
  width: 349px;
  height: 7px;
  margin-top: -3px;
  position: relative;
  box-sizing: border-box;
  background: #2f80bd;
  border-bottom: 1px solid #1b3f8e;
}

.view { flex: 1; min-width: 0; background: #fff; }
.scene { width: 100%; height: 100%; display: block; }
.axis { font-family: "Noto Sans", sans-serif; font-size: 21px; }

/* Griff zum Einklappen, liegt über dem Seitenrand */
.handle {
  position: absolute;
  left: 350px;
  top: 450px;
  width: 23px;
  height: 88px;
  box-sizing: border-box;
  display: flex;
  align-items: center;
  justify-content: center;
  background: #f7f7f7;
  border: 1px solid #9c9c9c;
  border-left: 0;
}
</style>
